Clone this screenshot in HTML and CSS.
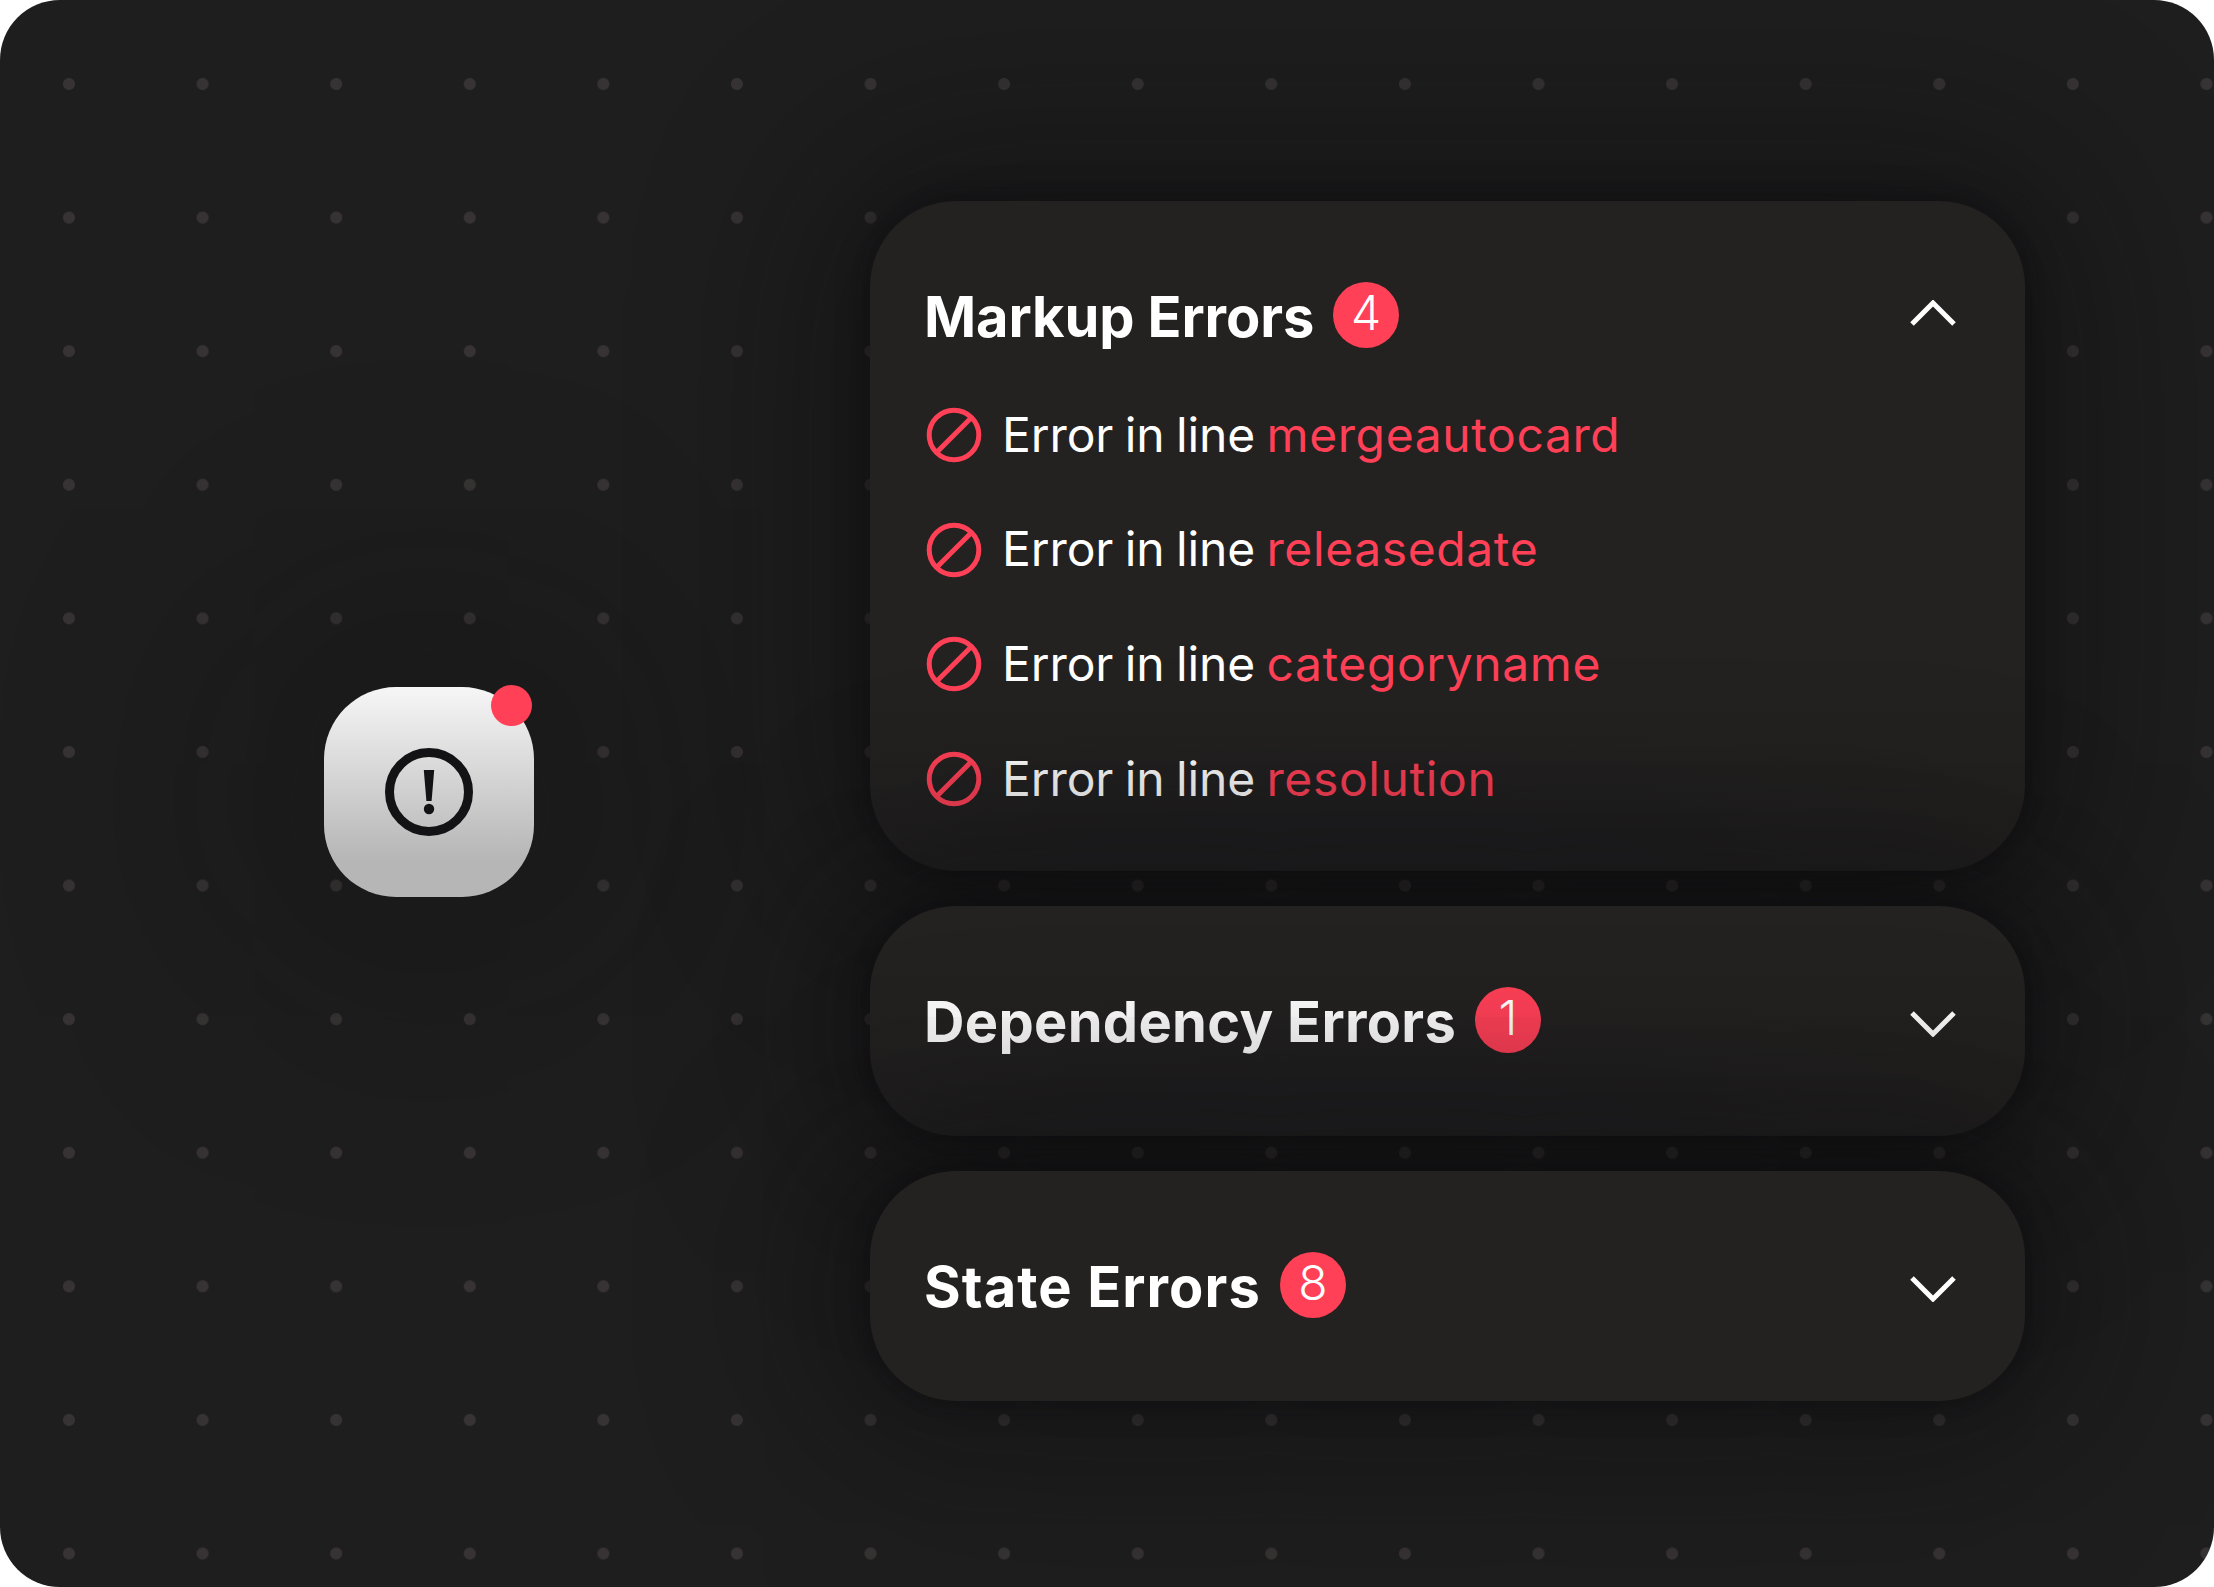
FILE: index.html
```html
<!DOCTYPE html>
<html lang="en">
<head>
  <meta charset="UTF-8">
  <title>Errors</title>
  <link rel="stylesheet" href="styles.css">
</head>
<body>
  <div class="frame">
    <div class="left">
      <div class="alert-icon">
        <svg width="98" height="98" viewBox="0 0 98 98">
          <circle cx="49" cy="49" r="39.5" fill="none" stroke="#131316" stroke-width="9"/>
          <path d="M43.8 27h10.4l-2.6 31h-5.2z" fill="#131316"/>
          <circle cx="49" cy="66" r="5.2" fill="#131316"/>
        </svg>
        <span class="alert-dot"></span>
      </div>
    </div>

    <div class="cards">
      <div class="card card-open fade">
        <div class="card-head">
          <h2 class="title-markup">Markup Errors</h2>
          <span class="badge">4</span>
          <svg class="chevron chevron-up" width="46" height="26" viewBox="0 0 46 26"><path d="M2 24 23 3l21 21" fill="none" stroke="#fff" stroke-width="5"/></svg>
        </div>
        <ul>
          <li>
            <svg class="ban" width="56" height="56" viewBox="0 0 56 56"><circle cx="28" cy="28" r="24.8" fill="none" stroke="#ff4057" stroke-width="5"/><path d="M11 45 45 11" stroke="#ff4057" stroke-width="5"/></svg>
            Error in line&nbsp;<span class="name">mergeautocard</span>
          </li>
          <li>
            <svg class="ban" width="56" height="56" viewBox="0 0 56 56"><circle cx="28" cy="28" r="24.8" fill="none" stroke="#ff4057" stroke-width="5"/><path d="M11 45 45 11" stroke="#ff4057" stroke-width="5"/></svg>
            Error in line&nbsp;<span class="name">releasedate</span>
          </li>
          <li>
            <svg class="ban" width="56" height="56" viewBox="0 0 56 56"><circle cx="28" cy="28" r="24.8" fill="none" stroke="#ff4057" stroke-width="5"/><path d="M11 45 45 11" stroke="#ff4057" stroke-width="5"/></svg>
            Error in line&nbsp;<span class="name">categoryname</span>
          </li>
          <li>
            <svg class="ban" width="56" height="56" viewBox="0 0 56 56"><circle cx="28" cy="28" r="24.8" fill="none" stroke="#ff4057" stroke-width="5"/><path d="M11 45 45 11" stroke="#ff4057" stroke-width="5"/></svg>
            Error in line&nbsp;<span class="name">resolution</span>
          </li>
        </ul>
      </div>

      <div class="card fade">
        <div class="card-head">
          <h2>Dependency Errors</h2>
          <span class="badge">1</span>
          <svg class="chevron" width="46" height="26" viewBox="0 0 46 26"><path d="M2 2l21 21L44 2" fill="none" stroke="#fff" stroke-width="5"/></svg>
        </div>
      </div>

      <div class="card">
        <div class="card-head">
          <h2 class="title-state">State Errors</h2>
          <span class="badge">8</span>
          <svg class="chevron" width="46" height="26" viewBox="0 0 46 26"><path d="M2 2l21 21L44 2" fill="none" stroke="#fff" stroke-width="5"/></svg>
        </div>
      </div>
    </div>
  </div>
</body>
</html>
```

FILE: styles.css
```css
body {
  margin: 0;
  background: #fff;
  font-family: 'Inter', sans-serif;
}

.frame {
  width: 2214px;
  height: 1587px;
  display: flex;
  border-radius: 60px;
  overflow: hidden;
  background-color: #1e1e1f;
  background-image: radial-gradient(circle, #373334 0, #373334 5.5px, transparent 6.5px);
  background-size: 133.6px 133.6px;
  background-position: 2.2px 17.2px;
}

.left {
  width: 870px;
  flex: none;
  padding: 687px 0 0 324px;
  box-sizing: border-box;
}

.alert-icon {
  position: relative;
  width: 210px;
  height: 210px;
  display: flex;
  align-items: center;
  justify-content: center;
  border-radius: 72px;
  background: linear-gradient(#f6f6f6 0, #d9d9d9 38%, #b6b6b6 82%);
  box-shadow: 0 0 220px 110px rgba(10,10,10,0.25);
}

.alert-dot {
  position: absolute;
  top: -2px;
  right: 2px;
  width: 41px;
  height: 41px;
  border-radius: 50%;
  background: #ff4057;
}

.cards {
  width: 1155px;
  padding-top: 201px;
  display: flex;
  flex-direction: column;
  gap: 35px;
}

.card {
  position: relative;
  height: 230px;
  padding: 0 54px;
  box-sizing: border-box;
  border-radius: 86px;
  background: #242220;
  box-shadow: 0 0 30px rgba(10,10,12,0.55), 0 0 170px 60px rgba(10,10,10,0.4);
}

.card-open {
  height: 670px;
  padding-top: 53px;
}

.fade {
  background: radial-gradient(ellipse 900px 170px at 42% 100%, #201f21 25%, rgba(36,34,32,0) 100%), #242220;
}

/* slight dim over the text near the bottom of the card */
.fade::after {
  content: "";
  position: absolute;
  left: 0;
  right: 0;
  bottom: 0;
  height: 200px;
  border-radius: 0 0 86px 86px;
  background: linear-gradient(rgba(0,0,0,0), rgba(0,0,0,0.08));
  pointer-events: none;
}

.card-head {
  height: 230px;
  display: flex;
  align-items: center;
}

.card-open .card-head {
  height: 124px;
}

.card-head h2 {
  margin: 2px 0 0;
  font-size: 56px;
  font-weight: 700;
  letter-spacing: 0.3px;
  color: #fff;
}

.card-head .title-markup {
  letter-spacing: -0.1px;
}

.card-head .title-state {
  letter-spacing: 1.1px;
}

.badge {
  width: 66px;
  height: 66px;
  margin: -2px 0 0 19px;
  display: flex;
  align-items: center;
  justify-content: center;
  border-radius: 50%;
  background: #ff4057;
  color: #fff;
  font-size: 48px;
  font-weight: 300;
  line-height: 60px;
  padding-bottom: 5px;
  box-sizing: border-box;
}

.chevron {
  margin: 6px 15px 0 auto;
}

.chevron-up {
  margin-top: -6px;
}

ul {
  list-style: none;
  margin: -1px 0 0;
  padding: 0;
}

li {
  height: 114.6px;
  display: flex;
  align-items: center;
  font-size: 48px;
  font-weight: 400;
  letter-spacing: -0.1px;
  word-spacing: -2px;
  color: #fff;
}

.ban {
  margin: 2px 20px 0 2px;
}

.name {
  color: #ff4057;
  letter-spacing: 0.6px;
}
```
